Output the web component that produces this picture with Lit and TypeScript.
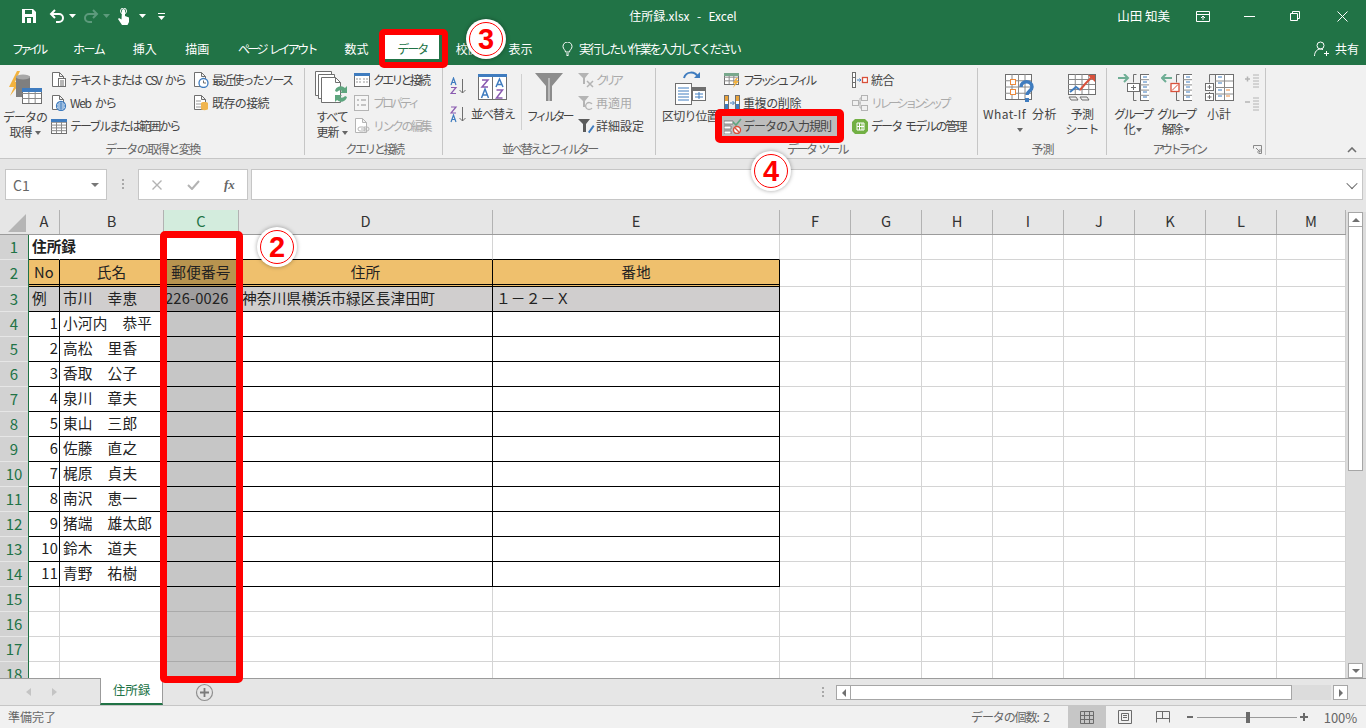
import { LitElement, html, css, svg } from "lit";
import { customElement } from "lit/decorators.js";

const ic = (w: number, h: number, c: unknown, cls = "") =>
  html`<svg class="ic ${cls}" width=${w} height=${h} viewBox="0 0 ${w} ${h}" fill="none">${c}</svg>`;

const G = "#6f6f6f";
const B = "#3f7cbf";
const O = "#ed8a3c";
const D = "#b4b4b4";

const doc = (x: number, y: number, col = G) =>
  svg`<path d="M${x + .5} ${y + .5}h7l4 4v10h-11z M${x + 7.5} ${y + .5}v4h4" stroke=${col} fill="#fff"/>`;

const tbl = (x: number, y: number, w: number, h: number, rows: number, cs: number) => {
  const lines: unknown[] = [];
  for (let i = 1; i < rows; i++) lines.push(svg`<path d="M${x} ${y + .5 + (i * h) / rows}h${w}" stroke="#8a8a8a"/>`);
  for (let i = 1; i < cs; i++) lines.push(svg`<path d="M${x + .5 + (i * w) / cs} ${y}v${h}" stroke="#8a8a8a"/>`);
  return svg`<rect x=${x + .5} y=${y + .5} width=${w} height=${h} fill="#fff" stroke=${G}/>${lines}`;
};

const icons = {
  save: ic(16, 16, svg`<path d="M1 1h11l3 3v11H1z" fill="#fff"/><rect x="4" y="2" width="7" height="4" fill="#217346"/><rect x="4" y="9" width="8" height="6" fill="#217346"/><rect x="6" y="10" width="4" height="5" fill="#fff"/>`),
  undo: ic(16, 14, svg`<path d="M2 5h8a4 4 0 0 1 0 8H7" stroke="#fff" stroke-width="2"/><path d="M6 1L2 5l4 4" stroke="#fff" stroke-width="2"/>`),
  redo: ic(16, 14, svg`<path d="M14 5H6a4 4 0 0 0 0 8h3" stroke="#5d9a7c" stroke-width="2"/><path d="M10 1l4 4-4 4" stroke="#5d9a7c" stroke-width="2"/>`),
  touch: ic(14, 17, svg`<path d="M5 2.500a1.500 1.500 0 0 1 3 0V8l4 1.500V14l-1.500 3H5L1 11l1-1 2.500 1.500z" fill="#fff"/><circle cx="6.500" cy="3" r="3" stroke="#fff"/>`),
  caret: ic(7, 4, svg`<path d="M0 0h7L3.500 4z" fill="#fff"/>`),
  caretD: ic(7, 4, svg`<path d="M0 0h7L3.500 4z" fill="#5d9a7c"/>`),
  custom: ic(7, 7, svg`<path d="M0 0h7v1H0z M0 3h7L3.500 7z" fill="#fff"/>`),
  ribbonMode: ic(14, 11, svg`<path d="M.5 .5h13v10H.5z M.5 3.500h13" stroke="#fff"/><path d="M7 9V5M5 7l2-2 2 2" stroke="#fff"/>`),
  min: ic(11, 1, svg`<path d="M0 .5h11" stroke="#fff"/>`),
  restore: ic(10, 10, svg`<path d="M.5 2.500h7v7h-7z M2.500 2.500v-2h7v7h-2" stroke="#fff"/>`),
  close: ic(11, 11, svg`<path d="M.5 .5l10 10M10.500 .5l-10 10" stroke="#fff"/>`),
  bulb: ic(11, 14, svg`<path d="M3.500 10c0-2-2.500-3-2.500-5.500a4.500 4.500 0 0 1 9 0C10 7 7.500 8 7.500 10z M4 12h3M4.500 13.500h2" stroke="#fff"/>`),
  share: ic(16, 16, svg`<circle cx="6.500" cy="4.500" r="3.500" stroke="#fff"/><path d="M.5 15c0-4 2.500-7 6-7 1 0 2 .3 2.500.6M12.500 10v5M10 12.500h5" stroke="#fff"/>`),
  getdata: ic(34, 34, svg`<path d="M9 0L1 16h5L2 25 13 11H7l5-11z" fill="#f2b23e"/><path d="M8 6c0-2 14-2 14 0v20H8z" fill="#7f7f7f"/><ellipse cx="15" cy="6" rx="7" ry="2.500" fill="#a8a8a8"/>${tbl(14, 17, 19, 15, 3, 3)}<rect x="14" y="17" width="20" height="4" fill="#3f7cbf"/>`),
  text: ic(16, 16, svg`${doc(1, 0)}<rect x="7.500" y="6.500" width="7" height="8" fill="#fff" stroke=${G}/><path d="M9 9h4M9 11h4M9 13h4" stroke=${G}/>`),
  web: ic(16, 16, svg`${doc(1, 0)}<circle cx="10" cy="11" r="4.500" fill="#fff" stroke=${B} stroke-width="1.300"/><path d="M6 11h8M10 7v8M7 9h6M7 13h6" stroke=${B}/>`),
  table: ic(16, 16, svg`${tbl(0, 1, 15, 14, 5, 3)}<rect x="0" y="1" width="16" height="3" fill=${B}/>`),
  recent: ic(16, 16, svg`${doc(1, 0)}<circle cx="10.500" cy="11" r="4.500" fill="#fff" stroke=${B} stroke-width="1.300"/><path d="M10.500 8.500V11h2.500" stroke=${G}/>`),
  existing: ic(16, 16, svg`${doc(1, 0)}<path d="M3 6h5M3 9h5M3 12h5" stroke="#999"/><path d="M8 8c0-1.500 7-1.500 7 0v6c0 1.500-7 1.500-7 0z" fill="#f0b54f"/>`),
  refresh: ic(34, 34, svg`<path d="M.5 .5h16v24H.5z" fill="#fff" stroke=${G}/><path d="M3.500 3.500h16v24h-16z" fill="#fff" stroke=${G}/><path d="M6.500 6.500h14l5 5v20h-19z" fill="#fff" stroke=${G}/><path d="M20.500 6.500v5h5" stroke=${G}/><path d="M20 20a6 6 0 0 1 10-3l2-2v7h-7l2-2a3.500 3.500 0 0 0-5 1z" fill="#5ea67f"/><path d="M32 26a6 6 0 0 1-10 3l-2 2v-7h7l-2 2a3.500 3.500 0 0 0 5-1z" fill="#5ea67f"/>`),
  query: ic(16, 16, svg`${tbl(0, 1, 15, 13, 1, 1)}<rect x="0" y="1" width="16" height="3" fill=${B}/><path d="M9 7h5M9 10h5M2 7h5M2 10h5" stroke="#999" stroke-dasharray="2 1"/>`),
  props: ic(16, 16, svg`<rect x=".5" y=".5" width="14" height="15" fill="#f6f6f6" stroke=${D}/><path d="M3 5h2M3 10h2M7 5h5M7 10h5" stroke=${D} stroke-width="1.500"/>`),
  links: ic(16, 16, svg`${doc(1, 0, D)}<path d="M7 11h6M6 9h3a2 2 0 0 1 0 4H6a2 2 0 0 1 0-4zM10 9h3a2 2 0 0 1 0 4h-3" stroke=${D}/>`),
  sortAZ: ic(18, 18, svg`<path d="M12.500 2v14M9.500 13l3 3 3-3" stroke=${G}/><path d="M1 8l2.500-7L6 8M2 5.500h3" stroke=${B} stroke-width="1.200"/><path d="M1 10.500h5L1 16.500h5" stroke="#8a5bb0" stroke-width="1.200"/>`),
  sortZA: ic(18, 18, svg`<path d="M12.500 2v14M9.500 13l3 3 3-3" stroke=${G}/><path d="M1 2h5L1 8h5" stroke="#8a5bb0" stroke-width="1.200"/><path d="M1 17l2.500-7L6 17M2 14.500h3" stroke=${B} stroke-width="1.200"/>`),
  sort: ic(30, 26, svg`<rect x=".5" y="2.500" width="28" height="23" fill="#fff" stroke=${G}/><rect x="0" y="0" width="29" height="3" fill=${B}/><path d="M14.500 3v22" stroke=${G}/><path d="M4 6h6L4 13h6" stroke="#8a5bb0" stroke-width="1.500"/><path d="M3.500 24l3.500-9 3.500 9M5 21h4" stroke=${B} stroke-width="1.500"/><path d="M18 13l3.500-8 3.500 8M19.500 10.500h4" stroke=${B} stroke-width="1.500"/><path d="M18.500 16h6l-6 8h6" stroke="#8a5bb0" stroke-width="1.500"/>`),
  filter: ic(28, 28, svg`<path d="M0 0h28L17 13v15h-6V13z" fill="#8c8c8c"/><path d="M14 5v23" stroke="#b9b9b9" stroke-width="2"/>`),
  clear: ic(18, 16, svg`<path d="M1 1h11L8 6v6H6V6z" fill=${D}/><path d="M10 9l6 6M16 9l-6 6" stroke=${D} stroke-width="1.500"/>`),
  reapply: ic(18, 16, svg`<path d="M1 1h11L8 6v6H6V6z" fill=${D}/><path d="M15 9a3.500 3.500 0 1 0 0 4" stroke=${D} stroke-width="1.300"/>`),
  advanced: ic(18, 16, svg`<path d="M1 1h12L9 6v8H6V6z" fill="#5b5b5b"/><path d="M11 14l5-7 1.500 1.200-5 7z" fill=${B}/>`),
  split: ic(32, 36, svg`<path d="M10 8c2-7 11-7 14-1" stroke=${B} stroke-width="2"/><path d="M20 7h6V1z" fill=${B} transform="translate(0 1)"/><rect x="1.500" y="13.500" width="16" height="21" fill="#fff" stroke=${G}/><path d="M4 18h11M4 21h11M4 24h11M4 27h11M4 30h11" stroke=${B}/><rect x="18.500" y="17.500" width="13" height="13" fill="#fff" stroke=${G}/><rect x="18" y="17" width="14" height="4" fill=${G}/><path d="M21 24h8M21 27h8M25 22v7" stroke=${B}/>`),
  flash: ic(16, 16, svg`${tbl(0, 1, 14, 11, 3, 3)}<rect x="0" y="1" width="15" height="3" fill="#78a88c"/><path d="M12 6l-3 5h2l-2 5 6-7h-3l2-3z" fill="#f2b23e"/>`),
  dedupe: ic(16, 16, svg`<rect x=".5" y=".5" width="4" height="15" fill="#fff" stroke=${G}/><rect x="11.500" y=".5" width="4" height="15" fill="#fff" stroke=${G}/><path d="M1 1h3v5H1zM12 1h3v5h-3z" fill="#e9a33c"/><path d="M1 9h3v5H1zM12 9h3v5h-3z" fill=${B}/><path d="M6 8h4M8.500 6l2 2-2 2" stroke=${B}/>`),
  validate: ic(18, 16, svg`<path d="M0 3h9v3H0zM0 8h7v3H0zM0 13h7v3H0z" fill="#fff" stroke=${G} stroke-width=".8"/><path d="M9 4l3 3 5-6" stroke="#5ea67f" stroke-width="1.600"/><circle cx="13" cy="12" r="3.500" fill="#fff" stroke="#d9513b" stroke-width="1.400"/><path d="M10.800 9.800l4.400 4.400" stroke="#d9513b" stroke-width="1.400"/>`),
  merge: ic(16, 16, svg`<rect x=".5" y=".5" width="3" height="15" fill="#fff" stroke=${G}/><path d="M0 5.500h4M0 10.500h4" stroke=${G}/><rect x="10.500" y="5.500" width="5" height="5" fill="#fff" stroke="#d9513b" stroke-width="1.300"/><path d="M5 8h4M7.500 6.500L9 8l-1.500 1.500" stroke=${B}/>`),
  relation: ic(16, 16, svg`<rect x=".5" y="5.500" width="6" height="5" stroke=${D}/><rect x="9.500" y=".5" width="6" height="5" stroke=${D}/><rect x="9.500" y="10.500" width="6" height="5" stroke=${D}/><path d="M7 8h2M8 3h1M8 13h1M8 3v10" stroke=${D}/>`),
  model: ic(16, 16, svg`<path d="M3 1h10l3 3v9l-3 3H3l-3-3V4z" fill="#72b044"/><path d="M5 5h7v7H5z M7.500 5v7M10 5v7M5 8.500h7" stroke="#fff"/>`),
  whatif: ic(30, 28, svg`${tbl(0, 0, 26, 25, 4, 4)}<rect x="5.500" y="5.500" width="5" height="5" fill="#fff" stroke=${O}/><rect x="5.500" y="15.500" width="5" height="5" fill="#fff" stroke=${O}/><path d="M16 13c0-7 11-7 11 0 0 4-5 4-5 8" stroke=${B} stroke-width="3.500"/><rect x="20" y="24" width="4" height="4" fill=${B}/>`),
  forecast: ic(28, 27, svg`${tbl(0, 0, 27, 20, 4, 4)}<path d="M2 18l6-5 4 3" stroke=${B} stroke-width="2"/><path d="M12 16l6-7 7-7" stroke="#d9513b" stroke-width="2"/><path d="M20 1h7v7z" fill="#d9513b"/><path d="M1 23h7l2 3H3zM12 23h7l2 3h-7z" stroke=${G}/>`),
  group: ic(31, 27, svg`<path d="M0 4h10M6 0l4 4-4 4" stroke="#6fae95" stroke-width="2"/><path d="M18.500 .5h-3v8M15.500 18v8.500h3" stroke=${G}/>${tbl(22, 0, 9, 26, 5, 1)}<path d="M25 3h4M25 8h4M25 13h4M25 18h4M25 23h4" stroke=${B}/><rect x="9.500" y="9.500" width="12" height="8" fill="#fff" stroke=${G}/><path d="M13 13.500h5M15.500 11v5" stroke=${G}/>`),
  ungroup: ic(31, 27, svg`<path d="M11 4H1M5 0L1 4l4 4" stroke="#6fae95" stroke-width="2"/><path d="M18.500 .5h-3v8M15.500 18v8.500h3" stroke=${G}/>${tbl(22, 0, 9, 26, 5, 1)}<path d="M25 3h4M25 8h4M25 13h4M25 18h4M25 23h4" stroke=${B}/><rect x="10" y="9.500" width="8" height="8" fill="#fff" stroke="#d9513b" stroke-width="1.300"/><path d="M11 16.500l6-6" stroke="#d9513b"/>`),
  subtotal: ic(29, 27, svg`<path d="M10.500 .5h-6v8M4.500 18v8.500" stroke=${G}/><rect x=".5" y="9.500" width="8" height="7" fill="#fff" stroke=${G}/><rect x=".5" y="19.500" width="8" height="7" fill="#fff" stroke=${G}/><path d="M2.500 13h4M4.500 11v4M2.500 23h4M4.500 21v4" stroke=${G}/>${tbl(10, 0, 18, 26, 4, 2)}<path d="M13 3h4M13 9h4M13 16h4M13 22h4" stroke=${B}/><path d="M21 16h4M21 22h4" stroke=${O}/>`),
  showDetail: ic(16, 16, svg`<path d="M1 5h5M3.500 2.500v5" stroke=${D} stroke-width="1.500"/><path d="M9 1h6M9 4h6M9 7h6M9 10h6M9 13h6" stroke=${D}/>`),
  hideDetail: ic(16, 16, svg`<path d="M1 5h5" stroke=${D} stroke-width="1.500"/><path d="M9 1h6M9 4h6M9 7h6M9 10h6M9 13h6" stroke=${D}/>`),
  launcher: ic(9, 9, svg`<path d="M.5 3.500v-3h8v8h-3" stroke="#8a8a8a"/><path d="M3 3l4 4M4 7h3V4" stroke="#8a8a8a"/>`),
  collapse: ic(10, 6, svg`<path d="M1 5l4-4 4 4" stroke=${G} stroke-width="1.600"/>`),
  x: ic(10, 10, svg`<path d="M.5 .5l9 9M9.500 .5l-9 9" stroke="#b3b3b3" stroke-width="1.400"/>`),
  check: ic(13, 10, svg`<path d="M1 5l4 4 7-8" stroke="#b3b3b3" stroke-width="2"/>`),
  plus: ic(19, 19, svg`<circle cx="9.500" cy="9.500" r="8" stroke="#8f8f8f" stroke-width="1.200"/><path d="M5 9.500h9M9.500 5v9" stroke="#7b7b7b" stroke-width="1.800"/>`),
  vNormal: ic(14, 13, svg`<path d="M.5 .5h13v12H.5z M.5 4.500h13M.5 8.500h13M4.500 .5v12M9.500 .5v12" stroke="#6b6b6b"/>`),
  vPage: ic(14, 14, svg`<path d="M.5 .5h13v13H.5z" stroke="#6b6b6b"/><path d="M3.500 3.500h7v7h-7z M5 5.500h4M5 7.500h4" stroke="#6b6b6b"/>`),
  vBreak: ic(14, 12, svg`<path d="M.5 11.500V.5h13v11 M.5 7.500h13M6.500 .5v7" stroke="#6b6b6b"/>`),
};

const COLS = [31, 104, 75, 254, 287, 71, 71, 71, 71, 71, 71, 71, 69];
const LETTERS = "ABCDEFGHIJKLM".split("");
const NAMES = ["小河内　恭平", "高松　里香", "香取　公子", "泉川　章夫", "東山　三郎", "佐藤　直之", "梶原　貞夫", "南沢　恵一", "猪端　雄太郎", "鈴木　道夫", "青野　祐樹"];

@customElement("app-root")
export class AppRoot extends LitElement {
  static styles = css`
    :host { display: block; width: 1366px; height: 728px; position: relative; overflow: hidden; background: #e6e6e6; color: #444;
      font-family: "Noto Sans CJK JP", "Noto Sans", sans-serif; font-size: 12px; line-height: 1; word-spacing: 3px; }
    .ic { display: block; flex: none; }
    .app { display: flex; flex-direction: column; height: 728px; }
    /* title */
    .green { background: #217346; color: #fff; height: 65px; flex: none; display: flex; flex-direction: column; }
    .titlebar { height: 32px; display: grid; grid-template-columns: 1fr auto 1fr; align-items: center; }
    .qat { display: flex; align-items: center; padding-left: 21px; }
    .qat .ic { margin-right: 4px; }
    .title { font-size: 12px; white-space: pre; letter-spacing: 0; word-spacing: 1px; }
    .win { display: flex; justify-content: flex-end; align-items: center; }
    .user { font-size: 12.5px; margin-right: 26px; word-spacing: 0; }
    .win .b1 { margin-right: 34px; }
    .win .b2 { margin-right: 35px; }
    .win .b3 { margin-right: 37px; }
    .win .b4 { margin-right: 18px; }
    .tabs { height: 33px; display: flex; align-items: center; padding-left: 12px; font-size: 12px; }
    .tab { white-space: pre; margin-right: 28.6px; }
    .tab.t-file { letter-spacing: -3.9px; }
    .tab.t-home { letter-spacing: -1.5px; }
    .tab.t-page { letter-spacing: -2.6px; }
    .tab.active { color: #217346; position: relative; letter-spacing: -2px; }
    .tab.active::before { content: ""; position: absolute; inset: -13px -12px -4px -12px; background: #fff; }
    .tab.active span { position: relative; }
    .tell { display: flex; align-items: center; gap: 6px; margin-left: 1px; letter-spacing: -1.9px; }
    .share { margin-left: auto; margin-right: 7px; display: flex; align-items: center; gap: 5px; }
    /* ribbon */
    .ribbon { height: 94px; flex: none; background: #f1f1f1; border-bottom: 1px solid #c6c6c6; box-sizing: border-box; display: flex; position: relative; padding-top: 3px; }
    .grp { display: flex; flex-direction: column; flex: none; position: relative; box-sizing: border-box; }
    .grp::after { content: ""; position: absolute; right: 0; top: 0; bottom: 3px; width: 1px; background: #c6c6c6; }
    .cols { height: 73px; display: flex; flex: none; }
    .glabel { height: 17px; text-align: center; color: #666; line-height: 16px; white-space: pre; }
    .glabel.out { padding-right: 16px; }
    .big { display: flex; flex-direction: column; align-items: center; flex: none; white-space: pre; line-height: 15px; letter-spacing: -1px; }
    .big .txt { text-align: center; }
    .big .car { display: inline-block; margin-left: 3px; width: 0; height: 0; border: 3px solid transparent; border-top: 4px solid #666; border-bottom: 0; vertical-align: 2px; }
    .col { display: flex; flex-direction: column; flex: none; }
    .si { height: 23px; display: flex; align-items: center; gap: 3px; white-space: pre; letter-spacing: -1px; }
    .si.off { color: #aaa; }
    .si.g1 { gap: 1px; }
    .hot { background: #bdbdbd; height: 20px; margin: 2px 0 1px -3px; padding-left: 3px; width: 118px; box-sizing: border-box; }
    .sepv { width: 1px; height: 56px; margin-top: 6px; background: #d0d0d0; flex: none; }
    .collapse { position: absolute; right: 9px; bottom: 5px; }
    .launcher { position: absolute; right: 4px; bottom: 4px; }
    /* formula */
    .fbar { height: 51px; flex: none; display: flex; align-items: flex-start; padding-top: 10px; box-sizing: border-box; background: #e6e6e6; }
    .box { height: 31px; background: #fff; border: 1px solid #c6c6c6; box-sizing: border-box; display: flex; align-items: center; }
    .name { width: 102px; margin-left: 5px; padding: 0 7px; justify-content: space-between; font-size: 14px; color: #666; }
    .tri { width: 0; height: 0; border: 4px solid transparent; border-top: 4px solid #777; border-bottom: 0; }
    .dots { width: 31px; display: flex; flex-direction: column; align-items: center; gap: 2px; padding-top: 10px; }
    .dots i { width: 2px; height: 2px; background: #a8a8a8; }
    .fx { width: 110px; padding-left: 13px; gap: 25px; }
    .fxt { font-family: "Liberation Serif", serif; font-style: italic; font-weight: 700; font-size: 13px; color: #666; margin-left: -1px; }
    .finput { margin-left: 3px; width: 1112px; justify-content: flex-end; padding-right: 6px; }
    .chev { width: 7px; height: 7px; border: solid #666; border-width: 0 1.5px 1.5px 0; transform: rotate(45deg) translate(-1px,-1px); }
    /* sheet */
    .sheet { height: 468px; flex: none; display: flex; position: relative; background: #e6e6e6; }
    .gridwrap { width: 1346px; flex: none; overflow: hidden; }
    .hrow { display: flex; height: 25px; box-sizing: border-box; border-bottom: 1px solid #9b9b9b; background: #e6e6e6; }
    .corner { width: 29px; flex: none; position: relative; box-sizing: border-box; }
    .corner svg { position: absolute; left: 8px; top: 4px; }
    .ch { box-sizing: border-box; flex: none; border-right: 1px solid #b2b2b2; display: flex; align-items: center; justify-content: center; font-size: 14.67px; color: #333; padding-bottom: 1px; }
    .ch.sel { background: #d3ecdd; color: #217346; }
    .rows { height: 443px; overflow: hidden; }
    .r { display: flex; height: 25px; }
    .r2 { height: 27px; }
    .rh { width: 28px; flex: none; box-sizing: border-box; background: #d2d2d2; color: #217346; font-size: 15px; display: flex; align-items: center; justify-content: center; border-bottom: 1px solid #e6e6e6; padding-bottom: 2px; }
    .gb { width: 1px; flex: none; background: #217346; }
    .c { flex: none; box-sizing: border-box; background: #fff; border-right: 1px solid #d4d4d4; border-bottom: 1px solid #d4d4d4; font-size: 14.67px; letter-spacing: .2px; color: #222; display: flex; align-items: center; padding: 0 3px 2px; white-space: pre; min-width: 0; }
    .c.nr { border-right-color: transparent; }
    .c.bb { border-bottom-color: #000; }
    .c.b { border-right-color: #000; border-bottom-color: #000; }
    .c.dbl { border-bottom: 3px double #000; }
    .c.hd { background: #efc06d; justify-content: center; padding-bottom: 0; }
    .c.gy { background: #d0cece; }
    .c.right { justify-content: flex-end; padding-right: 1px; }
    .c.bold { font-weight: 700; position: relative; z-index: 1; letter-spacing: 0; }
    .c.selc { background: #c6c6c6; border-right-color: #aaa; border-bottom-color: #aaa; }
    .c.selhd { background: #b8944f; }
    .c.selgy { background: #a09e9e; padding-left: 1px; }
    .c.b.selc { border-bottom-color: #000; border-right-color: #000; }
    .vs { width: 20px; flex: none; position: relative; background: #dcdcdc; box-sizing: border-box; }
    .vs-top { height: 2px; background: #e6e6e6; }
    .sb { width: 15px; height: 15px; box-sizing: border-box; background: #fff; border: 1px solid #a6a6a6; display: flex; align-items: center; justify-content: center; margin-left: 2px; }
    .tu { width: 0; height: 0; border: 4px solid transparent; border-bottom: 4px solid #707070; border-top: 0; }
    .td { width: 0; height: 0; border: 4px solid transparent; border-top: 4px solid #707070; border-bottom: 0; }
    .tl { width: 0; height: 0; border: 4px solid transparent; border-right: 4px solid #707070; border-left: 0; }
    .tr { width: 0; height: 0; border: 4px solid transparent; border-left: 4px solid #707070; border-right: 0; }
    .vthumb { width: 15px; height: 244px; box-sizing: border-box; background: #fff; border: 1px solid #a6a6a6; border-top: 0; margin-left: 2px; }
    .vsp { height: 192px; }
    /* tabs */
    .stabs { height: 27px; flex: none; box-sizing: border-box; background: #e6e6e6; border-top: 1px solid #9b9b9b; display: flex; align-items: flex-start; position: relative; }
    .nav { width: 100px; display: flex; gap: 21px; padding: 9px 0 0 26px; box-sizing: border-box; flex: none; }
    .nav i { width: 0; height: 0; border: 4px solid transparent; }
    .nav .l { border-right: 5px solid #c4c4c4; border-left: 0; }
    .nav .r5 { border-left: 5px solid #c4c4c4; border-right: 0; }
    .sheettab { width: 63px; height: 27px; margin-top: -1px; box-sizing: border-box; background: #fff; border: 1px solid #9b9b9b; border-top: 0; border-bottom: 2px solid #217346; color: #217346; font-size: 12.5px; display: flex; align-items: center; justify-content: center; }
    .add { margin: 4px 0 0 32px; }
    .sdots { margin-left: 606px; width: 6px; display: flex; flex-direction: column; gap: 2px; padding-top: 8px; align-items: center; }
    .sdots i { width: 2px; height: 2px; background: #a8a8a8; }
    .hs { margin-left: 10px; display: flex; padding-top: 6px; }
    .hs .sb { margin-left: 0; height: 15px; }
    .hthumb { width: 441px; height: 15px; box-sizing: border-box; background: #fff; border: 1px solid #a6a6a6; border-left: 0; }
    .htrack { width: 39px; height: 15px; background: #dcdcdc; margin-right: 2px; }
    /* status */
    .status { height: 23px; flex: none; box-sizing: border-box; background: #f1f1f1; border-top: 1px solid #c6c6c6; display: flex; align-items: center; color: #666; padding-left: 8px; }
    .count { margin-left: auto; letter-spacing: -1.1px; white-space: pre; }
    .vsel { width: 38px; height: 22px; margin-left: 19px; background: #c6c6c6; display: flex; align-items: center; justify-content: center; }
    .v2 { margin-left: 12px; }
    .v3 { margin-left: 24px; }
    .zm { width: 6px; margin-left: 17px; height: 2px; background: #6b6b6b; }
    .slider { width: 100px; height: 1px; background: #9a9a9a; margin-left: 4px; position: relative; }
    .slider i { position: absolute; left: 49px; top: -5px; width: 4px; height: 11px; background: #6b6b6b; }
    .zp { margin-left: 3px; width: 8px; height: 8px; background: linear-gradient(#6b6b6b,#6b6b6b) center/8px 2px no-repeat, linear-gradient(#6b6b6b,#6b6b6b) center/2px 8px no-repeat; margin-right: 16px; }
    .pct { margin-right: 9px; font-size: 13px; letter-spacing: -.1px; }
    /* overlays */
    .red { position: absolute; box-sizing: border-box; border: 7px solid #ff0000; border-radius: 5px; pointer-events: none; }
    .red.tabbox { left: 379px; top: 29px; width: 69px; height: 39px; border-width: 6px; }
    .red.rulebox { left: 715px; top: 109px; width: 129px; height: 34px; }
    .red.colbox { left: 160px; top: 231px; width: 83px; height: 452px; }
    .num { position: absolute; width: 40px; height: 40px; border-radius: 50%; background: #fff; box-shadow: 0 0 4px rgba(0,0,0,.35); display: flex; align-items: center; justify-content: center; color: #f00; font: 700 29px "Liberation Sans", sans-serif; box-sizing: border-box; }
    .num::before { content: ""; position: absolute; inset: 3px; border-radius: 50%; border: 1px solid #f00; }
    .n3 { left: 466px; top: 19px; }
    .n4 { left: 751px; top: 151px; }
    .n2 { left: 257px; top: 227px; }
  `;

  private si(icon: unknown, text: string, ls = -1, cls = "") {
    return html`<div class="si ${cls}">${icon}<span style="letter-spacing:${ls}px">${text}</span></div>`;
  }

  private lab(text: string, ls: number, cls = "") {
    return html`<div class="glabel ${cls}" style="letter-spacing:${ls}px">${text}</div>`;
  }

  private cell(row: number, col: number, w: number) {
    const L = LETTERS[col];
    const cls: string[] = ["c"];
    let text = "";
    const dataCol = col <= 4;
    if (row === 1) {
      if (col < 2) cls.push("nr");
      if (dataCol) cls.push("bb");
      if (col === 0) { text = "住所録"; cls.push("bold"); }
    } else if (row >= 2 && row <= 14 && dataCol) {
      cls.push("b");
      if (row === 2) {
        cls.push("hd", "dbl");
        text = ["No", "氏名", "郵便番号", "住所", "番地"][col];
      } else if (row === 3) {
        cls.push("gy");
        text = ["例", "市川　幸恵", "226-0026", "神奈川県横浜市緑区長津田町", "１－２－Ｘ"][col];
      } else {
        if (col === 0) { text = String(row - 3); cls.push("right"); }
        if (col === 1) text = NAMES[row - 4];
      }
    }
    if (L === "C" && row > 1) {
      cls.push("selc");
      if (row === 2) cls.push("selhd");
      if (row === 3) cls.push("selgy");
    }
    return html`<div class=${cls.join(" ")} style="width:${w}px">${text}</div>`;
  }

  render() {
    const rows = Array.from({ length: 18 }, (_, i) => i + 1);
    return html`
      <div class="app">
        <div class="green">
          <div class="titlebar">
            <div class="qat">
              ${icons.save}
              <span style="width:8px"></span>${icons.undo}${icons.caret}
              <span style="width:3px"></span>${icons.redo}${icons.caretD}
              <span style="width:3px"></span>${icons.touch}
              <span style="width:4px"></span>${icons.caret}
              <span style="width:8px"></span>${icons.custom}
            </div>
            <div class="title">住所録.xlsx  -  Excel</div>
            <div class="win">
              <span class="user">山田 知美</span>
              <span class="b1">${icons.ribbonMode}</span>
              <span class="b2">${icons.min}</span>
              <span class="b3">${icons.restore}</span>
              <span class="b4">${icons.close}</span>
            </div>
          </div>
          <div class="tabs">
            <span class="tab t-file">ファイル</span>
            <span class="tab t-home">ホーム</span>
            <span class="tab">挿入</span>
            <span class="tab">描画</span>
            <span class="tab t-page">ページ レイアウト</span>
            <span class="tab">数式</span>
            <span class="tab active"><span>データ</span></span>
            <span class="tab">校閲</span>
            <span class="tab">表示</span>
            <span class="tell">${icons.bulb}<span>実行したい作業を入力してください</span></span>
            <span class="share">${icons.share}<span>共有</span></span>
          </div>
        </div>

        <div class="ribbon">
          <div class="grp" style="width:305px">
            <div class="cols">
              <div class="big" style="width:40px;margin-left:5px">
                <span style="height:38px;padding-top:3px">${icons.getdata}</span>
                <span class="txt">データの<br />取得<i class="car"></i></span>
              </div>
              <div class="col" style="width:142px;margin-left:6px">
                ${this.si(icons.text, "テキストまたは CSV から", -1.8)}
                ${this.si(icons.web, "Web から", -1.4)}
                ${this.si(icons.table, "テーブルまたは範囲から", -2)}
              </div>
              <div class="col">
                ${this.si(icons.recent, "最近使ったソース", -1.9)}
                ${this.si(icons.existing, "既存の接続", -.6)}
              </div>
            </div>
            ${this.lab("データの取得と変換", -1.5)}
          </div>

          <div class="grp" style="width:138px">
            <div class="cols">
              <div class="big" style="width:36px;margin-left:9px">
                <span style="height:38px;padding-top:3px">${icons.refresh}</span>
                <span class="txt">すべて<br />更新<i class="car"></i></span>
              </div>
              <div class="col" style="margin-left:4px">
                ${this.si(icons.query, "クエリと接続", -2.8)}
                ${this.si(icons.props, "プロパティ", -3, "off")}
                ${this.si(icons.links, "リンクの編集", -2.5, "off")}
              </div>
            </div>
            ${this.lab("クエリと接続", -2.5)}
          </div>

          <div class="grp" style="width:213px">
            <div class="cols">
              <div class="col" style="margin-left:7px;width:21px;padding-top:9px;gap:10px">${icons.sortAZ}${icons.sortZA}</div>
              <div class="big" style="width:44px;padding-top:6px">
                <span style="height:32px">${icons.sort}</span>
                <span class="txt">並べ替え</span>
              </div>
              <div class="sepv" style="margin-left:6px"></div>
              <div class="big" style="width:44px;margin-left:5px;padding-top:5px">
                <span style="height:35px">${icons.filter}</span>
                <span class="txt" style="letter-spacing:-3px">フィルター</span>
              </div>
              <div class="col" style="margin-left:6px">
                ${this.si(icons.clear, "クリア", -4, "off g1")}
                ${this.si(icons.reapply, "再適用", 0, "off g1")}
                ${this.si(icons.advanced, "詳細設定", 0, "g1")}
              </div>
            </div>
            ${this.lab("並べ替えとフィルター", -2.5)}
          </div>

          <div class="grp" style="width:322px">
            <div class="cols">
              <div class="big" style="width:58px;margin-left:5px;padding-top:2px">
                <span style="height:38px">${icons.split}</span>
                <span class="txt" style="letter-spacing:-.8px">区切り位置</span>
              </div>
              <div class="col" style="width:128px;margin-left:5px">
                ${this.si(icons.flash, "フラッシュ フィル", -3.4)}
                ${this.si(icons.dedupe, "重複の削除", -.4)}
                ${this.si(icons.validate, "データの入力規則", -1, "hot g1")}
              </div>
              <div class="col">
                ${this.si(icons.merge, "統合", -.4)}
                ${this.si(icons.relation, "リレーションシップ", -3.4, "off")}
                ${this.si(icons.model, "データ モデルの管理", -1.9)}
              </div>
            </div>
            ${this.lab("データ ツール", -2.5)}
          </div>

          <div class="grp" style="width:129px">
            <div class="cols">
              <div class="big" style="width:76px;margin-left:4px;padding-top:6px">
                <span style="height:32px">${icons.whatif}</span>
                <span class="txt" style="letter-spacing:.4px">What-If 分析<br /><i class="car" style="margin:0"></i></span>
              </div>
              <div class="big" style="width:40px;margin-left:4px;padding-top:6px">
                <span style="height:32px">${icons.forecast}</span>
                <span class="txt" style="letter-spacing:-.8px">予測<br />シート</span>
              </div>
            </div>
            ${this.lab("予測", -1)}
          </div>

          <div class="grp" style="width:159px">
            <div class="cols">
              <div class="big" style="width:42px;margin-left:5px;padding-top:6px">
                <span style="height:32px">${icons.group}</span>
                <span class="txt" style="letter-spacing:-2.3px">グループ<br />化<i class="car"></i></span>
              </div>
              <div class="big" style="width:42px;margin-left:1px;padding-top:6px">
                <span style="height:32px">${icons.ungroup}</span>
                <span class="txt" style="letter-spacing:-2.3px">グループ<br />解除<i class="car"></i></span>
              </div>
              <div class="big" style="width:32px;margin-left:6px;padding-top:6px">
                <span style="height:32px">${icons.subtotal}</span>
                <span class="txt" style="letter-spacing:0">小計</span>
              </div>
              <div class="col" style="margin-left:9px;padding-top:6px;gap:7px">${icons.showDetail}${icons.hideDetail}</div>
            </div>
            ${this.lab("アウトライン", -3.3, "out")}
            <span class="launcher">${icons.launcher}</span>
          </div>
          <span class="collapse">${icons.collapse}</span>
        </div>

        <div class="fbar">
          <div class="box name"><span>C1</span><i class="tri"></i></div>
          <div class="dots"><i></i><i></i><i></i></div>
          <div class="box fx">${icons.x}${icons.check}<span class="fxt">fx</span></div>
          <div class="box finput"><i class="chev"></i></div>
        </div>

        <div class="sheet">
          <div class="gridwrap">
            <div class="hrow">
              <div class="corner">${ic(18, 18, svg`<path d="M18 0v18H0z" fill="#b5b5b5"/>`)}</div>
              ${COLS.map((w, i) => html`<div class="ch ${LETTERS[i] === "C" ? "sel" : ""}" style="width:${w}px">${LETTERS[i]}</div>`)}
            </div>
            <div class="rows">
              ${rows.map((r) => html`<div class="r ${r === 2 ? "r2" : ""}">
                <div class="rh">${r}</div><div class="gb"></div>
                ${COLS.map((w, i) => this.cell(r, i, w))}
              </div>`)}
            </div>
          </div>
          <div class="vs">
            <div class="vs-top"></div>
            <div class="sb"><i class="tu"></i></div>
            <div class="vthumb"></div>
            <div class="vsp"></div>
            <div class="sb"><i class="td"></i></div>
          </div>
        </div>

        <div class="stabs">
          <div class="nav"><i class="l"></i><i class="r5"></i></div>
          <div class="sheettab">住所録</div>
          <span class="add">${icons.plus}</span>
          <div class="sdots"><i></i><i></i><i></i></div>
          <div class="hs">
            <div class="sb"><i class="tl"></i></div>
            <div class="hthumb"></div>
            <div class="htrack"></div>
            <div class="sb"><i class="tr"></i></div>
          </div>
        </div>

        <div class="status">
          <span class="ready">準備完了</span>
          <span class="count">データの個数: 2</span>
          <div class="vsel">${icons.vNormal}</div>
          <span class="v2">${icons.vPage}</span>
          <span class="v3">${icons.vBreak}</span>
          <i class="zm"></i>
          <div class="slider"><i></i></div>
          <i class="zp"></i>
          <span class="pct">100%</span>
        </div>
      </div>

      <div class="red tabbox"></div>
      <div class="red rulebox"></div>
      <div class="red colbox"></div>
      <div class="num n3">3</div>
      <div class="num n4">4</div>
      <div class="num n2">2</div>
    `;
  }
}
